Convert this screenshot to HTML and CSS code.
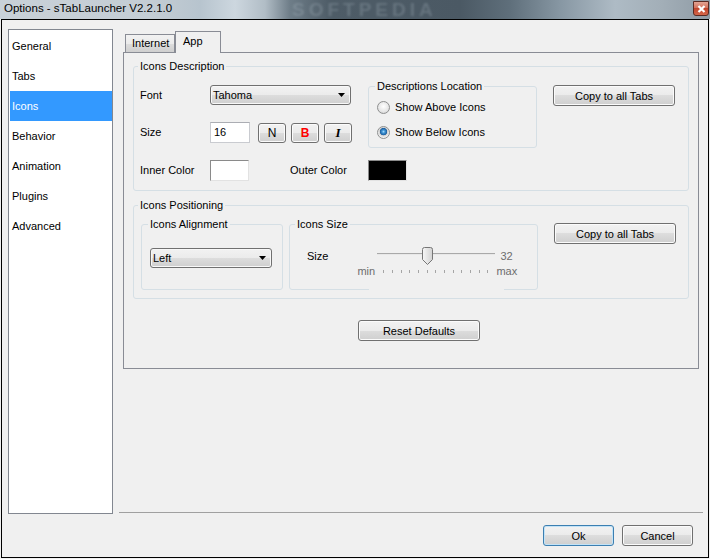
FILE: index.html
```html
<!DOCTYPE html>
<html lang="en">
<head>
    <meta charset="UTF-8">
    <meta name="viewport" content="width=device-width, initial-scale=1.0">
    <title>Options - sTabLauncher V2.2.1.0</title>
    <link rel="stylesheet" href="styles.css">
</head>
<body>
<div class="window">
    <div class="titlebar">
        <span class="title">Options - sTabLauncher V2.2.1.0</span>
        <span class="watermark">SOFTPEDIA</span>
        <span class="close">
            <svg width="9" height="8" viewBox="0 0 9 8"><path d="M1.5 1 L7.5 7 M7.5 1 L1.5 7" stroke="#fff" stroke-width="2.2"/></svg>
        </span>
    </div>
    <div class="frame">
        <div class="content">
            <ul class="nav">
                <li>General</li>
                <li>Tabs</li>
                <li class="selected">Icons</li>
                <li>Behavior</li>
                <li>Animation</li>
                <li>Plugins</li>
                <li>Advanced</li>
            </ul>
            <div class="main">
                <div class="tabs">
                    <span class="tab">Internet</span>
                    <span class="tab active">App</span>
                </div>
                <div class="panel">
                    <fieldset class="group desc">
                        <legend>Icons Description</legend>
                        <div class="desc-grid">
                            <span class="lbl font-lbl">Font</span>
                            <div class="combo font-combo">
                                <span>Tahoma</span>
                                <svg width="7" height="4" viewBox="0 0 7 4"><path d="M0 0 H7 L3.5 4 Z" fill="#000"/></svg>
                            </div>
                            <fieldset class="group location">
                                <legend>Descriptions Location</legend>
                                <label class="radio"><span class="dot"></span>Show Above Icons</label>
                                <label class="radio checked"><span class="dot"></span>Show Below Icons</label>
                            </fieldset>
                            <button class="btn copy">Copy to all Tabs</button>

                            <span class="lbl size-lbl">Size</span>
                            <div class="size-row">
                                <span class="field">16</span>
                                <button class="btn fmt">N</button>
                                <button class="btn fmt bold">B</button>
                                <button class="btn fmt italic">I</button>
                            </div>

                            <span class="lbl inner-lbl">Inner Color</span>
                            <span class="swatch white"></span>
                            <span class="lbl outer-lbl">Outer Color</span>
                            <span class="swatch black"></span>
                        </div>
                    </fieldset>

                    <fieldset class="group pos">
                        <legend>Icons Positioning</legend>
                        <div class="pos-row">
                            <fieldset class="group align">
                                <legend>Icons Alignment</legend>
                                <div class="combo align-combo">
                                    <span>Left</span>
                                    <svg width="7" height="4" viewBox="0 0 7 4"><path d="M0 0 H7 L3.5 4 Z" fill="#000"/></svg>
                                </div>
                            </fieldset>
                            <fieldset class="group isize">
                                <legend>Icons Size</legend>
                                <div class="isize-row">
                                    <span class="slider-lbl">Size</span>
                                    <div class="slider">
                                        <span></span>
                                        <div class="track">
                                            <svg class="thumb" width="11" height="18" viewBox="0 0 11 18">
                                                <defs>
                                                    <linearGradient id="tg" x1="0" x2="1">
                                                        <stop offset="0" stop-color="#f7f7f7"/>
                                                        <stop offset="1" stop-color="#d2d2d2"/>
                                                    </linearGradient>
                                                </defs>
                                                <path d="M0.5 2.5 Q0.5 0.5 2.5 0.5 H8.5 Q10.5 0.5 10.5 2.5 V12.5 L5.5 17.5 L0.5 12.5 Z" fill="url(#tg)" stroke="#767676"/>
                                            </svg>
                                        </div>
                                        <span class="val">32</span>
                                        <span class="min">min</span>
                                        <div class="ticks">
                                            <i></i><i></i><i></i><i></i><i></i><i></i><i></i><i></i><i></i><i></i><i></i><i></i><i></i>
                                        </div>
                                        <span class="max">max</span>
                                    </div>
                                </div>
                            </fieldset>
                            <button class="btn copy2">Copy to all Tabs</button>
                        </div>
                    </fieldset>

                    <div class="reset-row">
                        <button class="btn reset">Reset Defaults</button>
                    </div>
                </div>
                <div class="sep"></div>
            </div>
        </div>
        <div class="footer">
            <button class="btn ok">Ok</button>
            <button class="btn cancel">Cancel</button>
        </div>
    </div>
</div>
</body>
</html>
```

FILE: styles.css
```css
body {
    margin: 0;
    padding: 0;
    background-color: #f0f0f0;
    font-family: "Liberation Sans", Arial, sans-serif;
    font-size: 11px;
    color: #000;
}

.window {
    width: 710px;
    height: 559px;
    overflow: hidden;
}

/* title bar */
.titlebar {
    position: relative;
    height: 19px;
    display: flex;
    justify-content: space-between;
    align-items: flex-start;
    background: linear-gradient(90deg, #c9d1d8 0, #c4cdd4 150px, #b7c4ce 200px, #cdd7df 235px, #b1bdc6 265px,
        #6e7d88 290px, #4e5c67 330px, #4b5964 460px, #5f6f7b 510px, #8797a3 560px, #aebbc5 615px,
        #a3afb8 660px, #8f9ba5 710px);
    overflow: hidden;
}

.title {
    position: relative;
    z-index: 1;
    font-size: 11.5px;
    line-height: 15px;
    padding: 1px 0 0 4px;
}

.watermark {
    position: absolute;
    left: 292px;
    top: 0;
    font-size: 19px;
    line-height: 19px;
    font-weight: bold;
    letter-spacing: 4px;
    color: rgba(190, 204, 215, 0.22);
    filter: blur(1.3px);
}

.close {
    position: relative;
    width: 16px;
    height: 15px;
    margin: 1px 1px 0 0;
    box-sizing: border-box;
    border: 1px solid #5b2a22;
    border-radius: 0 0 3px 3px;
    background: linear-gradient(#e3a493, #d26b55 50%, #c2452c 50%, #d4664a);
    display: flex;
    align-items: center;
    justify-content: center;
}

/* window frame */
.frame {
    margin-left: 1px;
    width: 706px;
    height: 537px;
    border: 1px solid #000;
    display: flex;
    flex-direction: column;
}

.content {
    display: grid;
    grid-template-columns: 105px 1fr;
    column-gap: 6px;
    padding: 9px 5px 0 6px;
}

.nav {
    height: 485px;
    box-sizing: border-box;
    margin: 0;
    padding: 1px 0 0 1px;
    list-style: none;
    background: #fff;
    border: 1px solid #828790;
}

.nav li {
    height: 30px;
    line-height: 30px;
    padding-left: 2px;
}

.nav li.selected {
    background-color: #3399ff;
    color: #fff;
}

.main {
    display: flex;
    flex-direction: column;
}

/* tabs */
.tabs {
    position: relative;
    z-index: 1;
    display: flex;
    align-items: flex-end;
    height: 21px;
    margin: 2px 4px 0;
    padding-left: 2px;
}

.tab {
    box-sizing: border-box;
    height: 18px;
    line-height: 17px;
    padding: 0 6px;
    width: 50px;
    border: 1px solid #898c95;
    border-bottom: none;
    background: linear-gradient(#f2f2f2, #ebebeb 50%, #dddddd 50%, #cfcfcf);
}

.tab.active {
    width: 46px;
    height: 22px;
    line-height: 19px;
    padding: 0 0 0 7px;
    margin-bottom: -1px;
    background: #f0f0f0;
}

.panel {
    margin: 0 4px;
    padding: 7px 9px 27px;
    border: 1px solid #898c95;
}

/* group boxes */
.group {
    margin: 0;
    min-width: 0;
    border: 1px solid #d5dfe5;
    border-radius: 3px;
}

.group legend {
    padding: 0 2px;
    margin-left: -2px;
    line-height: 13px;
}

.desc {
    padding: 12px 0 9px 6px;
}

.desc-grid {
    display: grid;
    grid-template-columns: 70px 80px 78px 169px 16px 122px;
    grid-template-rows: 20px 38px 38px;
    align-items: end;
}

.lbl {
    line-height: 20px;
}

.font-lbl {
    grid-column: 1;
    grid-row: 1;
}

.size-lbl {
    grid-column: 1;
    grid-row: 2;
    line-height: 21px;
}

.inner-lbl {
    grid-column: 1;
    grid-row: 3;
    line-height: 21px;
}

.outer-lbl {
    grid-column: 3;
    grid-row: 3;
    line-height: 21px;
}

.combo {
    box-sizing: border-box;
    height: 20px;
    display: flex;
    align-items: center;
    justify-content: space-between;
    padding: 0 5px 0 2px;
    border: 1px solid #707070;
    border-radius: 3px;
    background: linear-gradient(#f2f2f2, #ebebeb 50%, #dddddd 50%, #cfcfcf);
    box-shadow: inset 0 0 0 1px #f8f8f8;
}

.font-combo {
    grid-column: 2 / 4;
    grid-row: 1;
    width: 141px;
}

.location {
    grid-column: 4;
    grid-row: 1 / 3;
    align-self: start;
    margin-top: -5px;
    padding: 6px 0 7px 8px;
}

.radio {
    display: flex;
    align-items: center;
    gap: 5px;
    height: 16px;
}

.radio + .radio {
    margin-top: 9px;
}

.dot {
    width: 13px;
    height: 13px;
    box-sizing: border-box;
    border-radius: 50%;
    border: 1px solid #8e8f8f;
    background: radial-gradient(circle at 50% 40%, #ffffff, #e6e6e6 60%, #c9c9c9);
}

.checked .dot {
    background: radial-gradient(circle at 50% 42%, #a8dcfb 0, #3f95d6 1.5px, #1d5f9f 3.4px, #d2d2d2 4px, #f4f4f4 6px);
}

.btn {
    box-sizing: border-box;
    height: 21px;
    padding: 0;
    font: inherit;
    color: #000;
    border: 1px solid #707070;
    border-radius: 3px;
    background: linear-gradient(#f2f2f2, #ebebeb 50%, #dddddd 50%, #cfcfcf);
    box-shadow: inset 0 0 0 1px #fbfbfb;
}

.copy {
    grid-column: 6;
    grid-row: 1;
    align-self: start;
    width: 122px;
}

.size-row {
    grid-column: 2 / 4;
    grid-row: 2;
    display: flex;
    align-items: center;
    gap: 5px;
    height: 21px;
}

.field {
    box-sizing: border-box;
    width: 40px;
    height: 21px;
    margin-right: 3px;
    padding-left: 3px;
    line-height: 19px;
    background: #fff;
    border: 1px solid #c9cbd0;
    border-top-color: #abadb3;
}

.fmt {
    width: 28px;
    height: 20px;
    font-size: 12px;
}

.fmt.bold {
    color: #f00;
    font-weight: bold;
}

.fmt.italic {
    font-family: "Liberation Serif", "Times New Roman", serif;
    font-style: italic;
    font-weight: bold;
    font-size: 13px;
}

.swatch {
    box-sizing: border-box;
    width: 39px;
    height: 21px;
    grid-row: 3;
    border: 1px solid;
    border-color: #8a8a8a #e2e2e2 #e2e2e2 #8a8a8a;
}

.swatch.white {
    grid-column: 2;
    background: #fff;
}

.swatch.black {
    grid-column: 4;
    background: #000;
}

/* icons positioning */
.pos {
    margin-top: 8px;
    padding: 6px 0 8px 7px;
}

.pos > legend {
    margin-left: -3px;
}

.pos-row {
    display: flex;
    align-items: stretch;
    gap: 6px;
}

.align {
    width: 142px;
    box-sizing: border-box;
    padding: 17px 0 0 8px;
}

.align-combo {
    width: 122px;
}

.isize {
    width: 249px;
    box-sizing: border-box;
    padding: 16px 0 11px 7px;
}

.isize-row {
    display: flex;
    align-items: flex-start;
}

.slider-lbl {
    margin-left: 10px;
    line-height: 18px;
}

.slider {
    position: relative;
    z-index: 0;
    margin-left: 29px;
    display: grid;
    grid-template-columns: 20px 118px auto;
    grid-template-rows: 18px 13px;
    color: #6d6d6d;
}

/* hides the group border under the slider, as in the original */
.slider::before {
    content: "";
    position: absolute;
    z-index: -1;
    left: 12px;
    top: 20px;
    width: 135px;
    height: 24px;
    background: #f0f0f0;
}

.track {
    position: relative;
    height: 2px;
    margin-top: 6px;
    background: linear-gradient(#a9a9a9 50%, #e8e8e8 50%);
}

.thumb {
    position: absolute;
    left: 45px;
    top: -6px;
}

.val {
    padding-left: 5px;
    line-height: 18px;
}

.min {
    line-height: 13px;
}

.ticks {
    display: flex;
    justify-content: space-between;
    align-items: center;
    margin-left: 6px;
    width: 105px;
}

.ticks i {
    width: 1px;
    height: 3px;
    background: #a5a5a5;
}

.max {
    padding-left: 1px;
    line-height: 13px;
}

.copy2 {
    width: 122px;
    margin: 5px 0 0 10px;
    align-self: flex-start;
}

.reset-row {
    margin-top: 21px;
}

.reset {
    width: 122px;
    margin-left: 225px;
}

.sep {
    margin-top: auto;
    margin-bottom: 1px;
    border-top: 1px solid #a0a0a0;
}

/* dialog buttons */
.footer {
    display: flex;
    justify-content: flex-end;
    gap: 8px;
    padding: 11px 15px 0 0;
}

.ok, .cancel {
    width: 71px;
    height: 21px;
}

.ok {
    border-color: #3c7fb1;
    box-shadow: inset 0 0 0 1px #c3e3f7;
}
```
